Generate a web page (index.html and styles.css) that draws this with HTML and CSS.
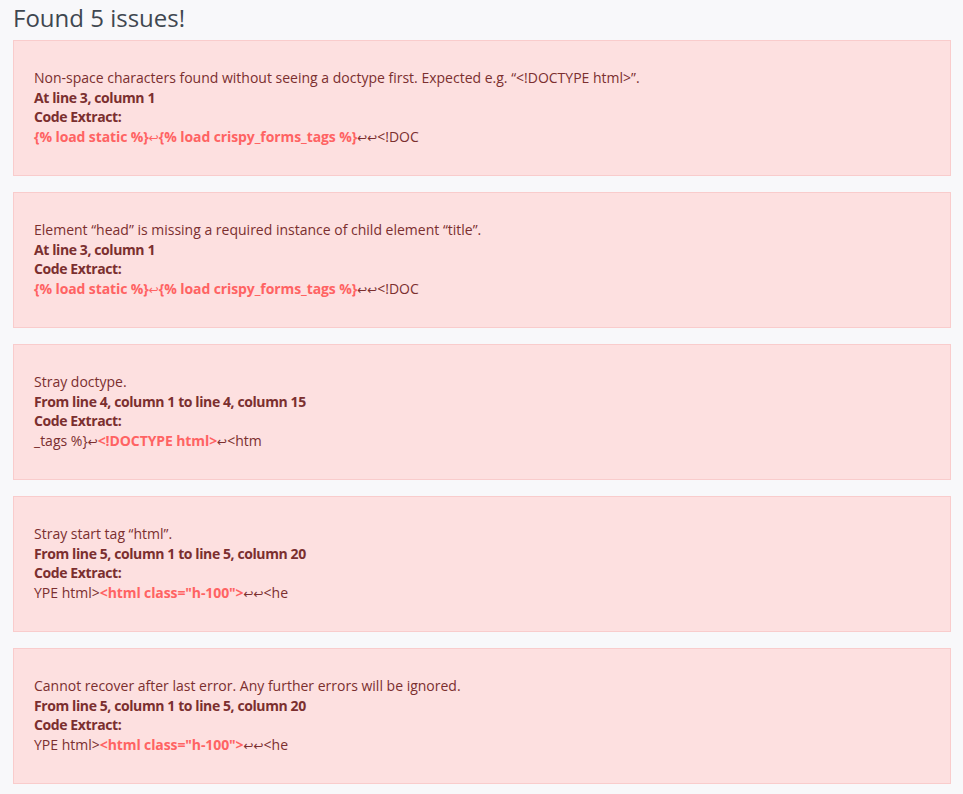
FILE: index.html
```html
<!DOCTYPE html>
<html>
<head>
<meta charset="utf-8">
<link rel="stylesheet" href="styles.css">
</head>
<body>
<main class="page">
  <h1 class="title">Found 5 issues!</h1>
  <div class="issues">
    <section class="issue">
      <div class="msg">Non-space characters found without seeing a doctype first. Expected e.g. “&lt;!DOCTYPE html&gt;”.</div>
      <div class="loc">At line 3, column 1</div>
      <div class="label">Code Extract:</div>
      <div class="code"><span class="hl">{% load static %}<span class="ret">↩</span>{% load crispy_forms_tags %}</span><span class="ret">↩↩</span>&lt;!DOC</div>
    </section>
    <section class="issue">
      <div class="msg">Element “head” is missing a required instance of child element “title”.</div>
      <div class="loc">At line 3, column 1</div>
      <div class="label">Code Extract:</div>
      <div class="code"><span class="hl">{% load static %}<span class="ret">↩</span>{% load crispy_forms_tags %}</span><span class="ret">↩↩</span>&lt;!DOC</div>
    </section>
    <section class="issue">
      <div class="msg">Stray doctype.</div>
      <div class="loc">From line 4, column 1 to line 4, column 15</div>
      <div class="label">Code Extract:</div>
      <div class="code">_tags %}<span class="ret">↩</span><span class="hl">&lt;!DOCTYPE html&gt;</span><span class="ret">↩</span>&lt;htm</div>
    </section>
    <section class="issue">
      <div class="msg">Stray start tag “html”.</div>
      <div class="loc">From line 5, column 1 to line 5, column 20</div>
      <div class="label">Code Extract:</div>
      <div class="code">YPE html&gt;<span class="hl">&lt;html class="h-100"&gt;</span><span class="ret">↩↩</span>&lt;he</div>
    </section>
    <section class="issue">
      <div class="msg">Cannot recover after last error. Any further errors will be ignored.</div>
      <div class="loc">From line 5, column 1 to line 5, column 20</div>
      <div class="label">Code Extract:</div>
      <div class="code">YPE html&gt;<span class="hl">&lt;html class="h-100"&gt;</span><span class="ret">↩↩</span>&lt;he</div>
    </section>
  </div>
</main>
</body>
</html>
```

FILE: styles.css
```css
html, body {
  margin: 0;
  padding: 0;
  background: #f8f8fa;
}
body {
  font-family: "Open Sans", "DejaVu Sans", sans-serif;
  color: #7b2f2f;
}
.page {
  padding: 3px 12px 0 13px;
}
.title {
  margin: 0 0 8px;
  font-size: 24px;
  line-height: 29px;
  font-weight: 400;
  color: #3f4750;
}
.issues {
  display: flex;
  flex-direction: column;
  gap: 16px;
}
.issue {
  height: 136px;
  box-sizing: border-box;
  background: #fde0e0;
  border: 1px solid #f9cccc;
  padding: 27px 20px 0 20px;
  font-size: 14px;
  line-height: 19.5px;
}
.loc, .label {
  font-weight: 700;
  letter-spacing: -0.4px;
}
.hl {
  color: #ff6363;
  font-weight: 700;
  letter-spacing: -0.1px;
}
.ret {
  font-weight: 400;
  font-size: 12px;
  letter-spacing: 0;
}
```
